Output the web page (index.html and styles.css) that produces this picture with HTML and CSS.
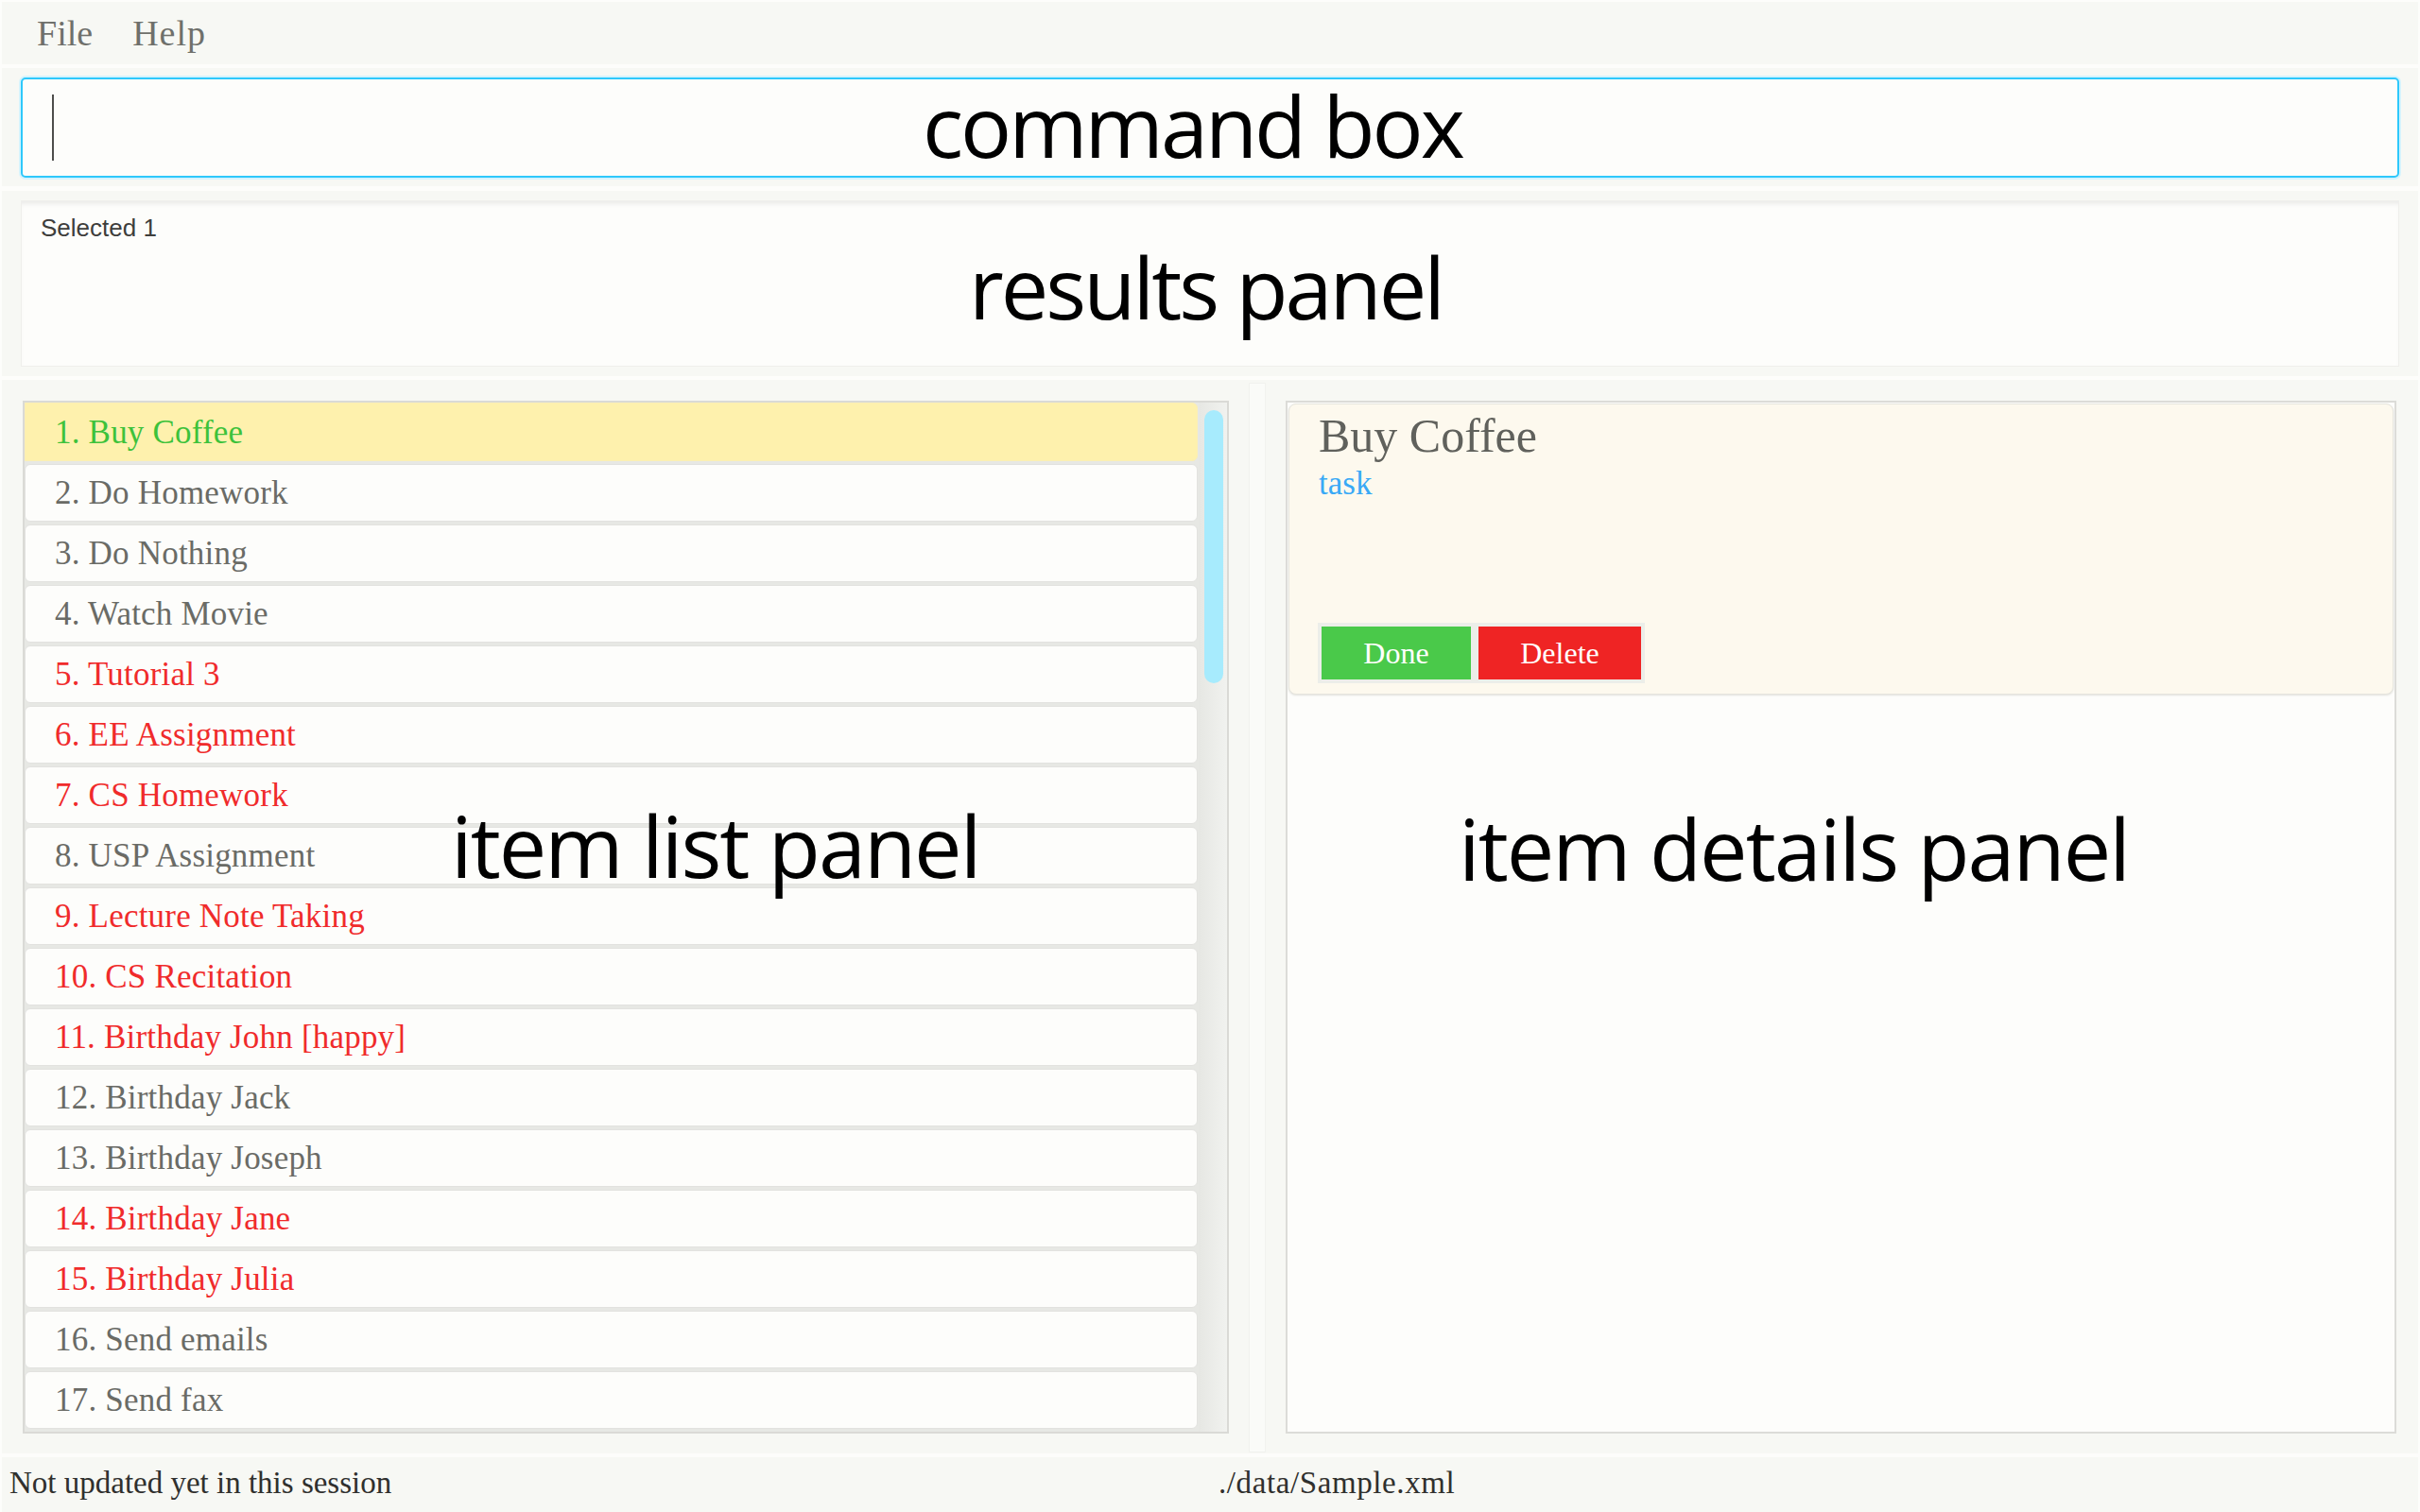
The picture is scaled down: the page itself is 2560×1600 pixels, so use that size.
FILE: index.html
```html
<!DOCTYPE html>
<html lang="en">
<head>
<meta charset="utf-8">
<title>Task Manager</title>
<link rel="stylesheet" href="styles.css">
</head>
<body>
<div class="app">
  <nav class="menubar">
    <span class="menu-item">File</span>
    <span class="menu-item">Help</span>
  </nav>

  <section class="command-area">
    <div class="command-box"><span class="caret"></span></div>
  </section>

  <section class="results-area">
    <div class="results-box">Selected 1</div>
  </section>

  <main class="split">
    <div class="pane pane-left">
      <div class="list-panel">
        <ul class="cells">
          <li class="cell selected done">1. Buy Coffee</li>
          <li class="cell">2. Do Homework</li>
          <li class="cell">3. Do Nothing</li>
          <li class="cell">4. Watch Movie</li>
          <li class="cell overdue">5. Tutorial 3</li>
          <li class="cell overdue">6. EE Assignment</li>
          <li class="cell overdue">7. CS Homework</li>
          <li class="cell">8. USP Assignment</li>
          <li class="cell overdue">9. Lecture Note Taking</li>
          <li class="cell overdue">10. CS Recitation</li>
          <li class="cell overdue">11. Birthday John [happy]</li>
          <li class="cell">12. Birthday Jack</li>
          <li class="cell">13. Birthday Joseph</li>
          <li class="cell overdue">14. Birthday Jane</li>
          <li class="cell overdue">15. Birthday Julia</li>
          <li class="cell">16. Send emails</li>
          <li class="cell">17. Send fax</li>
        </ul>
        <div class="scrollbar"><div class="thumb"></div></div>
      </div>
    </div>
    <div class="divider"><div class="divider-line"></div></div>
    <div class="pane pane-right">
      <div class="details-panel">
        <div class="card">
          <div class="card-title">Buy Coffee</div>
          <div class="card-tag">task</div>
          <div class="card-actions">
            <button class="btn btn-done">Done</button>
            <button class="btn btn-delete">Delete</button>
          </div>
        </div>
      </div>
    </div>
  </main>

  <footer class="statusbar">
    <div class="status-cell">Not updated yet in this session</div>
    <div class="status-cell status-path">./data/Sample.xml</div>
  </footer>

  <div class="label label-command">command box</div>
  <div class="label label-results">results panel</div>
  <div class="label label-wide label-list">item list panel</div>
  <div class="label label-wide label-details">item details panel</div>
</div>
</body>
</html>
```
FILE: styles.css
```css
* { box-sizing: border-box; }

html, body {
  margin: 0;
  padding: 0;
  background: #fdfdfb;
}

.app {
  position: relative;
  width: 2560px;
  height: 1600px;
  padding: 2px 2px 3px 2px;
  display: flex;
  flex-direction: column;
  gap: 4px;
  background: #fdfdfb;
  font-family: "Liberation Serif", "Times New Roman", serif;
  overflow: hidden;
}

/* Menu bar */
.menubar {
  height: 66px;
  flex: none;
  background: #f7f8f4;
  display: flex;
  align-items: flex-start;
  gap: 42px;
  padding-left: 37px;
}
.menu-item {
  font-size: 38px;
  line-height: 66px;
  color: #6f706b;
}
.menu-item + .menu-item { letter-spacing: 1px; }

/* Command box */
.command-area {
  height: 125px;
  flex: none;
  background: #f7f8f4;
  padding: 10px 20px 9px 20px;
}
.command-box {
  height: 106px;
  border: 2px solid #2ec8fb;
  border-radius: 5px;
  background: #fdfdfb;
  box-shadow: 0 0 0 2px #d4f3fd;
  padding: 16px 0 0 31px;
}
.caret {
  display: block;
  width: 2px;
  height: 70px;
  background: #4d4d4b;
}

/* Results */
.results-area {
  height: 196px;
  flex: none;
  margin-top: 1px;
  background: #f7f8f4;
  padding: 10px 20px 10px 20px;
}
.results-box {
  height: 176px;
  background: #fdfdfb;
  border: 1px solid #efefec;
  box-shadow: inset 0 5px 4px -2px #ececea;
  padding: 13px 20px;
  font-family: "Liberation Sans", Arial, sans-serif;
  font-size: 26px;
  line-height: 30px;
  color: #3e3e3c;
}

/* Split area */
.split {
  flex: 1;
  display: flex;
  background: #f7f8f4;
}
.pane-left {
  width: 1318px;
  padding: 22px 20px 21px 22px;
  display: flex;
}
.divider {
  width: 20px;
  padding: 3px 1px 1px 1px;
}
.divider-line {
  height: 100%;
  background: #fafbf8;
  border: 1px solid #f1f2ee;
}
.pane-right {
  flex: 1;
  padding: 22px 23px 21px 20px;
  display: flex;
}

.list-panel {
  flex: 1;
  border: 2px solid #dadad6;
  background: #e7e8e4;
  display: flex;
  overflow: hidden;
}
.cells {
  list-style: none;
  margin: 0;
  padding: 1px 1px 0 0;
  flex: 1;
  overflow: hidden;
}
.cell {
  height: 61px;
  margin-bottom: 3px;
  background: #fdfdfb;
  border: 1px solid #e2e2df;
  border-radius: 6px;
  padding-left: 31px;
  font-size: 35px;
  line-height: 59px;
  letter-spacing: 0.2px;
  color: #6a6b66;
  white-space: nowrap;
}
.cell.selected {
  background: #fef1ad;
  border-color: #fbefb4;
  border-radius: 0 6px 6px 0;
  margin-top: -1px;
  height: 62px;
  padding-top: 1px;
}
.cell.done { color: #3dc23b; }
.cell.overdue { color: #f02b2b; }

.scrollbar {
  width: 30px;
  flex: none;
  background: linear-gradient(to right, #e6e7e3, #f1f2ef);
  padding: 8px 4px 0 6px;
}
.thumb {
  height: 289px;
  border-radius: 10px;
  background: #a7ebfd;
}

.details-panel {
  flex: 1;
  border: 2px solid #dcdcd8;
  background: #fdfdfb;
  padding: 1px;
}
.card {
  height: 308px;
  background: #fdf9ee;
  border: 1px solid #e6e5de;
  border-radius: 8px;
  box-shadow: 0 1px 2px #e2e2dd;
  padding: 5px 30px 11px 31px;
  display: flex;
  flex-direction: column;
  align-items: flex-start;
}
.card-title {
  font-size: 50px;
  line-height: 56px;
  color: #60615c;
}
.card-tag {
  margin-top: 3px;
  font-size: 35px;
  line-height: 40px;
  color: #39a9f6;
}
.card-actions {
  margin-top: auto;
  margin-left: -1px;
  background: #eceee9;
  padding: 4px;
  display: flex;
  gap: 8px;
}
.btn {
  border: none;
  height: 56px;
  font-family: "Liberation Serif", "Times New Roman", serif;
  font-size: 32px;
  color: #ffffff;
  padding: 0;
}
.btn-done { width: 158px; background: #4ac94a; }
.btn-delete { width: 172px; background: #ef2424; }

/* Status bar */
.statusbar {
  height: 60px;
  flex: none;
  background: #f7f8f4;
  display: grid;
  grid-template-columns: 1fr 1fr;
}
.status-cell {
  padding: 0 8px;
  font-size: 33px;
  line-height: 55px;
  color: #30302e;
}
.status-cell + .status-cell { padding-left: 9px; }
.status-path { letter-spacing: 0.6px; }

/* Annotation overlays */
.label {
  position: absolute;
  font-family: "Open Sans", "Noto Sans", sans-serif;
  font-size: 90px;
  line-height: 90px;
  letter-spacing: -3px;
  color: #000;
  white-space: nowrap;
}
.label-wide { letter-spacing: -2px; }
.label-command { left: 976px; top: 87px; }
.label-results { left: 1025px; top: 258px; }
.label-list { left: 477px; top: 849px; }
.label-details { left: 1543px; top: 852px; }
```
